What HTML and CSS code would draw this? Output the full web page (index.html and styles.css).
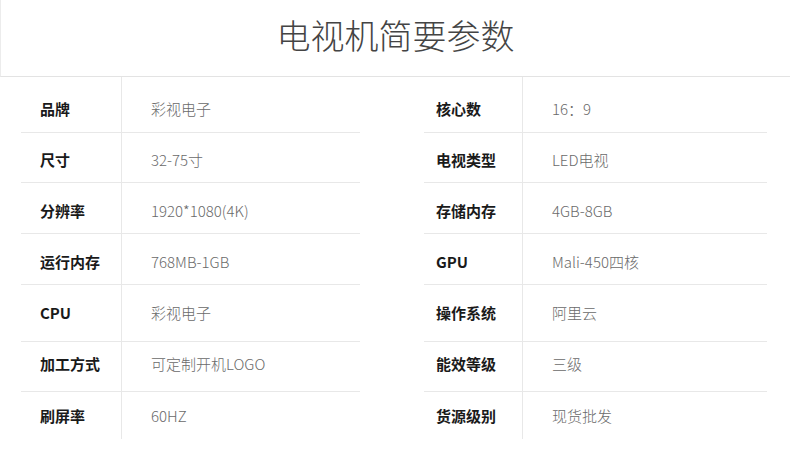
FILE: index.html
```html
<!DOCTYPE html>
<html lang="zh-CN">
<head>
<meta charset="utf-8">
<title>电视机简要参数</title>
<link rel="stylesheet" href="styles.css">
</head>
<body>
<header class="header">
  <h1 class="title">电视机简要参数</h1>
</header>
<main class="tables">
  <div class="table table-left">
    <div class="row r1"><div class="label">品牌</div><div class="value">彩视电子</div></div>
    <div class="row r2"><div class="label">尺寸</div><div class="value">32-75寸</div></div>
    <div class="row r3"><div class="label">分辨率</div><div class="value">1920*1080(4K)</div></div>
    <div class="row r4"><div class="label">运行内存</div><div class="value">768MB-1GB</div></div>
    <div class="row r5"><div class="label">CPU</div><div class="value">彩视电子</div></div>
    <div class="row r6"><div class="label">加工方式</div><div class="value">可定制开机LOGO</div></div>
    <div class="row r7"><div class="label">刷屏率</div><div class="value">60HZ</div></div>
  </div>
  <div class="table table-right">
    <div class="row r1"><div class="label">核心数</div><div class="value">16：9</div></div>
    <div class="row r2"><div class="label">电视类型</div><div class="value">LED电视</div></div>
    <div class="row r3"><div class="label">存储内存</div><div class="value">4GB-8GB</div></div>
    <div class="row r4"><div class="label">GPU</div><div class="value">Mali-450四核</div></div>
    <div class="row r5"><div class="label">操作系统</div><div class="value">阿里云</div></div>
    <div class="row r6"><div class="label">能效等级</div><div class="value">三级</div></div>
    <div class="row r7"><div class="label">货源级别</div><div class="value">现货批发</div></div>
  </div>
</main>
</body>
</html>
```

FILE: styles.css
```css
* { box-sizing: border-box; }
html, body {
  margin: 0;
  padding: 0;
  background: #fff;
  font-family: "Noto Sans CJK SC", "Noto Sans", sans-serif;
}
.header {
  height: 77px;
  border-bottom: 1px solid #e3e3e3;
  border-left: 1px solid #ececec;
  display: flex;
  align-items: center;
  justify-content: center;
  padding-bottom: 6px;
}
.title {
  margin: 0;
  font-size: 34px;
  font-weight: 300;
  color: #444;
  letter-spacing: 0;
  line-height: 1;
}
.tables {
  display: flex;
  padding-left: 21px;
  gap: 64px;
}
.table { display: flex; flex-direction: column; }
.table-left { width: 339px; }
.table-right { width: 343px; }
.row {
  display: grid;
  border-bottom: 1px solid #e8e8e8;
  font-size: 15px;
  line-height: 20px;
}
.table-left .row { grid-template-columns: 101px 1fr; }
.table-right .row { grid-template-columns: 99px 1fr; }
.row:last-child { border-bottom: none; }
.label, .value {
  display: flex;
  align-items: center;
}
.label {
  font-weight: 700;
  color: #1a1a1a;
  border-right: 1px solid #e8e8e8;
}
.table-left .label { padding-left: 19px; }
.table-right .label { padding-left: 12px; }
.value {
  padding-left: 29px;
  color: #6a6a6a;
  font-weight: 300;
}
.r1 { height: 56px; }
.r1 .label, .r1 .value { padding-top: 9px; }
.r2 { height: 50px; }
.r3, .r4 { height: 51px; }
.r2 .label, .r2 .value, .r3 .label, .r3 .value, .r4 .label, .r4 .value { padding-top: 5px; }
.r5 { height: 57px; }
.r6 { height: 50px; }
.r6 .label, .r6 .value { padding-bottom: 6px; }
.r7 { height: 47px; }
.r7 .label, .r7 .value { padding-top: 0; }
```
